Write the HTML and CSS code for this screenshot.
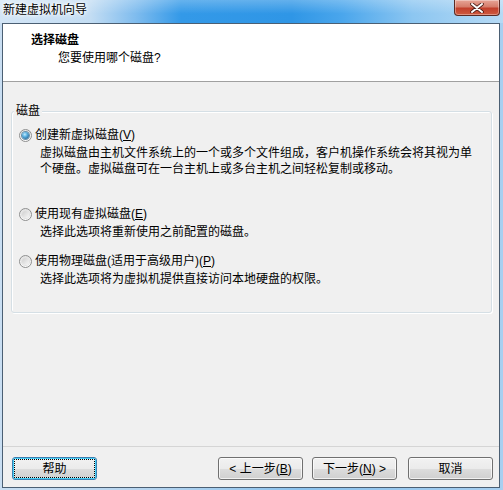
FILE: index.html
```html
<!DOCTYPE html>
<html lang="zh-CN">
<head>
<meta charset="utf-8">
<title>新建虚拟机向导</title>
<link rel="stylesheet" href="styles.css">
</head>
<body>
<div class="window">
  <div class="titlebar">
    <span class="title">新建虚拟机向导</span>
    <span class="close" aria-label="关闭">
      <svg width="14" height="10" viewBox="0 0 14 10"><path d="M2 1 L12 9 M12 1 L2 9" stroke="#4a1c16" stroke-width="3.6" stroke-linecap="round"/><path d="M2 1 L12 9 M12 1 L2 9" stroke="#ffffff" stroke-width="2" stroke-linecap="round"/></svg>
    </span>
  </div>
  <div class="client">
    <div class="header">
      <div class="h-title">选择磁盘</div>
      <div class="h-sub">您要使用哪个磁盘?</div>
    </div>
    <div class="body">
      <fieldset class="group">
        <legend>磁盘</legend>
        <div class="options">
          <div class="option">
            <div class="opt-row"><span class="radio checked"></span><span class="opt-label">创建新虚拟磁盘(<u>V</u>)</span></div>
            <div class="desc tall">虚拟磁盘由主机文件系统上的一个或多个文件组成，客户机操作系统会将其视为单个硬盘。虚拟磁盘可在一台主机上或多台主机之间轻松复制或移动。</div>
          </div>
          <div class="option">
            <div class="opt-row"><span class="radio"></span><span class="opt-label">使用现有虚拟磁盘(<u>E</u>)</span></div>
            <div class="desc">选择此选项将重新使用之前配置的磁盘。</div>
          </div>
          <div class="option">
            <div class="opt-row"><span class="radio"></span><span class="opt-label">使用物理磁盘(适用于高级用户)(<u>P</u>)</span></div>
            <div class="desc">选择此选项将为虚拟机提供直接访问本地硬盘的权限。</div>
          </div>
        </div>
      </fieldset>
    </div>
    <div class="footer">
      <button class="btn default">帮助</button>
      <span class="spacer"></span>
      <button class="btn">&lt; 上一步(<u>B</u>)</button>
      <button class="btn">下一步(<u>N</u>) &gt;</button>
      <button class="btn cancel">取消</button>
    </div>
  </div>
</div>
</body>
</html>
```
FILE: styles.css
```css
* { box-sizing: border-box; }
html, body { margin: 0; padding: 0; }
body {
  width: 503px;
  height: 490px;
  overflow: hidden;
  font-family: "Liberation Sans", "Noto Sans CJK SC", sans-serif;
  font-size: 12px;
  color: #000;
}
.window {
  width: 503px;
  height: 490px;
  display: flex;
  flex-direction: column;
  background: linear-gradient(to right, #c9def2 0%, #b5d4ef 30%, #8cc3ee 60%, #a8cff0 100%);
}
.titlebar {
  height: 23px;
  display: flex;
  align-items: flex-start;
  justify-content: space-between;
  padding-left: 3px;
  background:
    linear-gradient(to bottom, rgba(255,255,255,0.25) 0%, rgba(255,255,255,0) 60%),
    linear-gradient(to right, #d3e5f6 0%, #c3ddf3 18%, #7fbcee 27%, #3399e8 36%, #2f96e6 58%, #4aa6ec 68%, #8cc6f1 82%, #b6daf5 100%);
}
.title {
  line-height: 18px;
  margin-top: 1px;
  text-shadow: 0 0 6px #fff, 0 0 4px #fff, 0 0 2px #fff;
}
.close {
  width: 46px;
  height: 16px;
  margin-right: 3px;
  display: flex;
  align-items: center;
  justify-content: center;
  border: 1px solid #5a2a24;
  border-top: none;
  border-radius: 0 0 4px 4px;
  background: linear-gradient(to bottom, #e7a597 0%, #d67d6b 45%, #c2402c 55%, #cf5a3f 100%);
  box-shadow: inset 0 0 0 1px rgba(255,255,255,0.35);
}
.client {
  flex: 1;
  margin: 0 3px 2px 2px;
  border: 1px solid #4b5f73;
  background: #f0f0f0;
  display: flex;
  flex-direction: column;
}
.header {
  height: 58px;
  background: #fff;
  border-bottom: 1px solid #a0a0a0;
  padding: 8px 0 0 28px;
}
.h-title {
  font-weight: bold;
  line-height: 16px;
}
.h-sub {
  line-height: 16px;
  margin-top: 2px;
  padding-left: 27px;
}
.body {
  flex: 1;
  padding: 21px 7px 0 8px;
}
.group {
  margin: 0;
  padding: 0 0 25px 0;
  border: 1px solid #d5dfe5;
  border-radius: 3px;
  box-shadow: inset 1px 1px 0 #fff, 1px 1px 0 #fff;
  min-width: 0;
}
.group legend {
  margin-left: 2px;
  padding: 0 2px;
  line-height: 16px;
  background: #f0f0f0;
}
.options {
  padding: 8px 0 0 7px;
  display: flex;
  flex-direction: column;
  gap: 13px;
}
.opt-row {
  display: flex;
  align-items: center;
  height: 16px;
  gap: 3px;
}
.radio {
  width: 13px;
  height: 13px;
  border-radius: 50%;
  border: 1px solid #8e8f8f;
  background: linear-gradient(to bottom, #e4e4e4, #fdfdfd);
  display: flex;
  align-items: center;
  justify-content: center;
  flex: none;
}
.radio::after {
  content: "";
  width: 7px;
  height: 7px;
  border-radius: 50%;
  background: linear-gradient(135deg, #cfcfcf, #f6f6f6);
  box-shadow: 0 0 0 1px #e2e2e2;
}
.radio.checked::after {
  background: radial-gradient(circle at 40% 35%, #c7ecfc 0%, #5fb4e3 35%, #19598a 90%);
  box-shadow: 0 0 0 1px #6a8fa8;
}
.opt-label { line-height: 16px; }
.desc {
  margin: 2px 0 0 21px;
  line-height: 16px;
  width: 440px;
}
.desc.tall { min-height: 48px; }
.footer {
  height: 41px;
  border-top: 1px solid #d5d5d5;
  padding: 10px 6px 7px 9px;
  display: flex;
  align-items: flex-start;
}
.spacer { flex: 1; }
.btn {
  width: 85px;
  height: 23px;
  padding: 0;
  font: inherit;
  color: #000;
  border: 1px solid #707070;
  border-radius: 3px;
  background: linear-gradient(to bottom, #f2f2f2 0%, #ebebeb 50%, #dddddd 51%, #cfcfcf 100%);
  box-shadow: inset 0 0 0 1px rgba(255,255,255,0.7);
  line-height: 20px;
}
.btn + .btn { margin-left: 9px; }
.btn.cancel { margin-left: 11px; }
.btn.default {
  border-color: #3c7fb1;
  box-shadow: inset 0 0 0 1px #48d0f7, inset 0 0 0 2px rgba(255,255,255,0.4);
  outline: 1px dotted #000;
  outline-offset: -3px;
}
u { text-decoration: underline; text-underline-offset: 1px; }
```
